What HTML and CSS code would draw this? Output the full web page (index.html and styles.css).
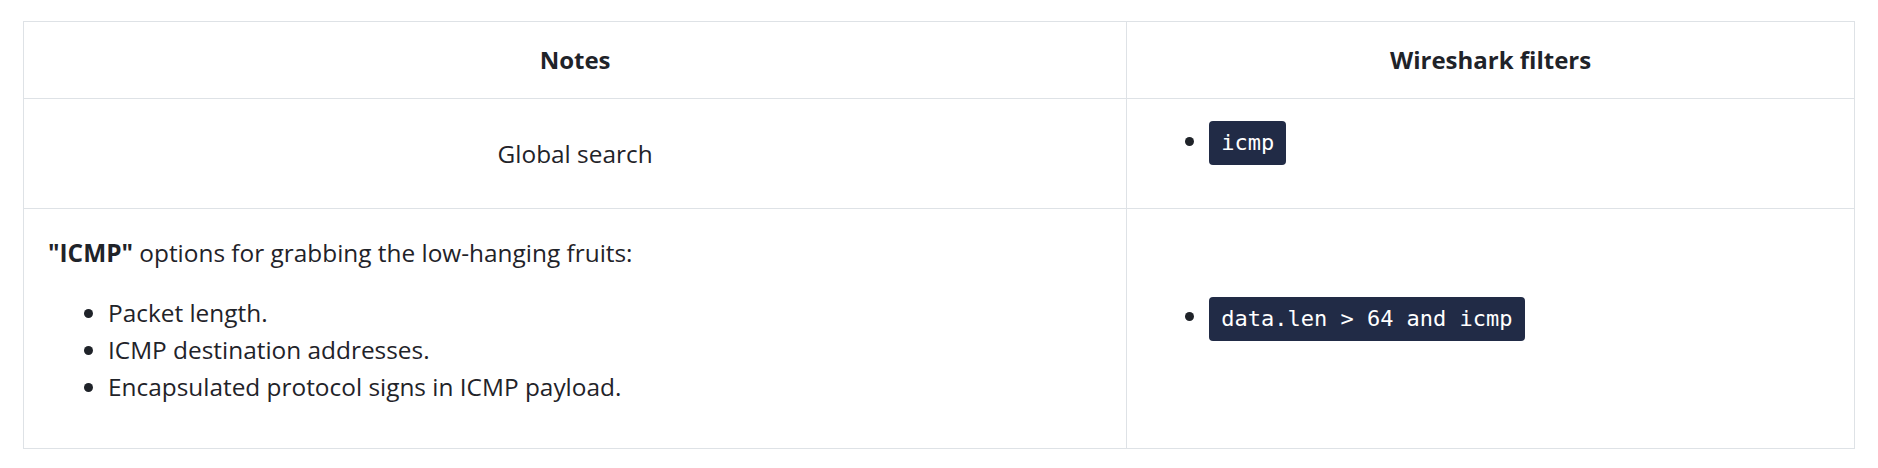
FILE: index.html
```html
<!DOCTYPE html>
<html lang="en">
<head>
  <meta charset="UTF-8" />
  <meta name="viewport" content="width=device-width, initial-scale=1.0" />
  <title>ICMP filters</title>
  <link rel="stylesheet" href="styles.css">
</head>
<body>

  <div class="table-wrap">
    <table class="filters">
      <thead>
        <tr>
          <th class="col-notes">Notes</th>
          <th class="col-filters">Wireshark filters</th>
        </tr>
      </thead>
      <tbody>
        <tr>
          <td class="center">Global search</td>
          <td class="filter-cell">
            <ul class="filter-list">
              <li><code>icmp</code></li>
            </ul>
          </td>
        </tr>
        <tr>
          <td class="notes-cell">
            <p><strong>"ICMP"</strong> options for grabbing the low-hanging fruits:</p>
            <ul class="notes-list">
              <li>Packet length.</li>
              <li>ICMP destination addresses.</li>
              <li>Encapsulated protocol signs in ICMP payload.</li>
            </ul>
          </td>
          <td class="filter-cell">
            <ul class="filter-list">
              <li><code>data.len &gt; 64 and icmp</code></li>
            </ul>
          </td>
        </tr>
      </tbody>
    </table>
  </div>

</body>
</html>
```

FILE: styles.css
```css
body {
  font-family: "Open Sans", "Noto Sans", sans-serif;
  font-size: 24.4px;
  line-height: 37px;
  color: #1f2329;
  background: #ffffff;
  margin: 0;
  padding: 21px 23px;
}

.filters {
  width: 100%;
  border-collapse: collapse;
  table-layout: fixed;
}

.filters th,
.filters td {
  border: 1px solid #dee2e6;
  padding: 20px 24px;
}

.filters th {
  font-size: 24px;
  font-weight: bold;
  line-height: 36px;
  text-align: center;
}

.col-notes {
  width: 60.8%;
}

.col-filters {
  width: 39.2%;
}

.filters td {
  vertical-align: middle;
}

.filters td.center {
  text-align: center;
  padding-top: 34px;
  padding-bottom: 34px;
}

.notes-cell p {
  margin: 5px 0 23px;
}

.notes-list {
  margin: 0 0 23px;
  padding-left: 60px;
}

.filter-list {
  margin: 0 0 23px;
  padding-left: 58px;
}

.filter-list li {
  line-height: 44px;
}

code {
  display: inline-block;
  font-family: "DejaVu Sans Mono", monospace;
  font-size: 22px;
  line-height: 30px;
  padding: 7px 12px;
  background-color: #212b46;
  color: #ffffff;
  border-radius: 4px;
  vertical-align: middle;
}
```
